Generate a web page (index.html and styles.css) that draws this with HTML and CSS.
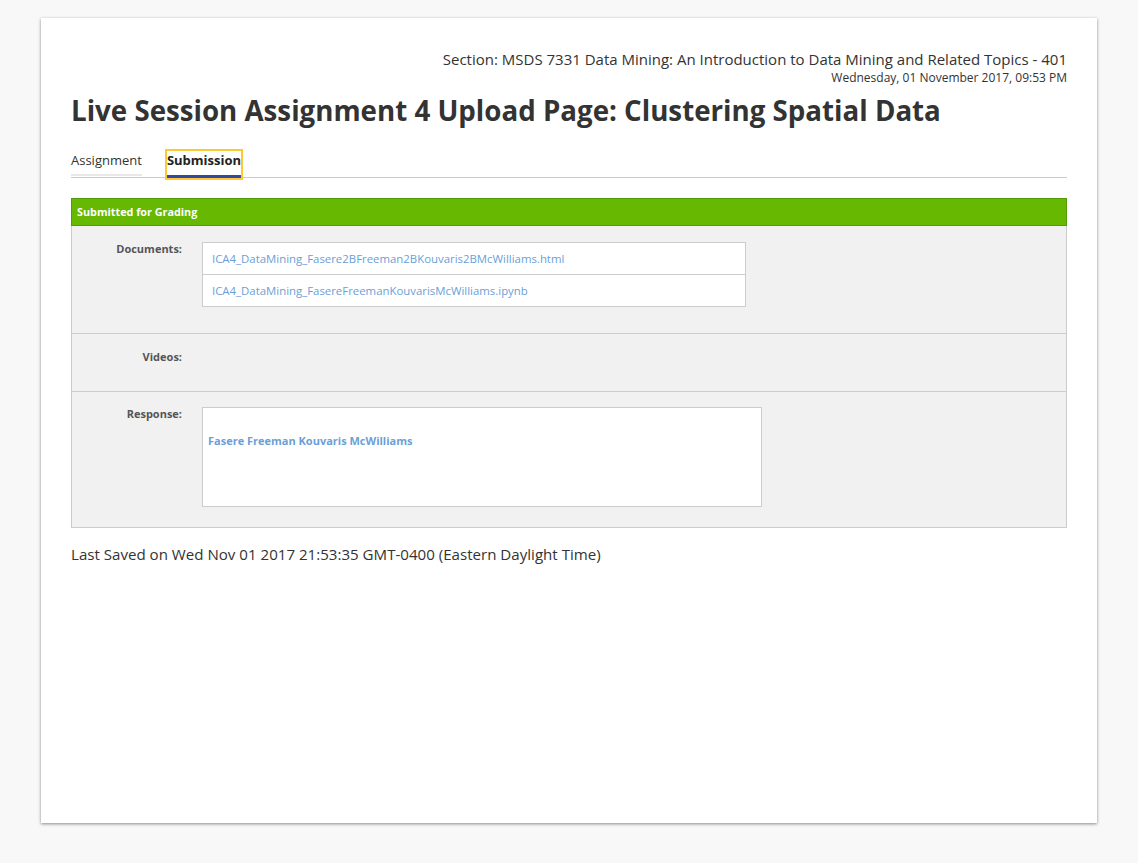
FILE: index.html
```html
<!DOCTYPE html>
<html>
<head>
<meta charset="utf-8">
<link rel="stylesheet" href="styles.css">
</head>
<body>
<div class="card">
  <div class="meta">
    <div class="section">Section: MSDS 7331 Data Mining: An Introduction to Data Mining and Related Topics - 401</div>
    <div class="date">Wednesday, 01 November 2017, 09:53 PM</div>
  </div>
  <h1 class="title">Live Session Assignment 4 Upload Page: Clustering Spatial Data</h1>
  <div class="tabs">
    <div class="tab tab-plain">Assignment</div>
    <div class="tab tab-active">Submission</div>
  </div>
  <div class="status">Submitted for Grading</div>
  <div class="panel">
    <div class="row row-docs">
      <div class="label">Documents:</div>
      <div class="docs">
        <div class="doc"><a class="link">ICA4_DataMining_Fasere2BFreeman2BKouvaris2BMcWilliams.html</a></div>
        <div class="doc"><a class="link">ICA4_DataMining_FasereFreemanKouvarisMcWilliams.ipynb</a></div>
      </div>
    </div>
    <div class="row row-videos">
      <div class="label">Videos:</div>
    </div>
    <div class="row row-response">
      <div class="label">Response:</div>
      <div class="response">Fasere Freeman Kouvaris McWilliams</div>
    </div>
  </div>
  <div class="saved">Last Saved on Wed Nov 01 2017 21:53:35 GMT-0400 (Eastern Daylight Time)</div>
</div>
</body>
</html>
```
FILE: styles.css
```css
html, body {
  margin: 0;
  padding: 0;
  background: #f8f8f8;
  font-family: "Open Sans", Lato, sans-serif;
  color: #333;
}
body {
  padding: 18px 41px 40px 41px;
}
.card {
  width: 1056px;
  height: 805px;
  box-sizing: border-box;
  background: #fff;
  box-shadow: 0 1px 3px rgba(0,0,0,0.45);
  padding: 31px 30px 0 30px;
}
.meta {
  text-align: right;
}
.section {
  font-size: 15px;
  line-height: 20px;
  color: #333;
}
.date {
  margin-top: 1px;
  font-size: 12px;
  line-height: 16px;
  color: #333;
}
.title {
  margin: 7px 0 0 0;
  font-size: 27.7px;
  line-height: 34px;
  font-weight: 700;
  color: #333;
}
.tabs {
  display: flex;
  align-items: flex-start;
  gap: 25px;
  margin-top: 24px;
  border-bottom: 1px solid #ccc;
}
.tab {
  font-size: 13px;
  line-height: 18px;
  box-sizing: border-box;
}
.tab-plain {
  color: #333;
  height: 25px;
  border-bottom: 2px solid #e8e8e8;
}
.tab-active {
  height: 27px;
  margin-bottom: -1px;
  font-weight: 700;
  color: #222;
  border-bottom: 3px solid #35479b;
  outline: 2px solid #fcc934;
  outline-offset: 0;
}
.status {
  margin-top: 20px;
  background: #66b800;
  border: 1px solid #4f9b08;
  color: #fff;
  font-size: 10.8px;
  font-weight: 700;
  line-height: 26px;
  height: 26px;
  padding-left: 5px;
}
.panel {
  background: #f1f1f1;
  border: 1px solid #ccc;
  border-top: none;
}
.row {
  display: flex;
  border-bottom: 1px solid #ccc;
}
.row:last-child {
  border-bottom: none;
}
.label {
  width: 110px;
  flex: none;
  text-align: right;
  font-size: 11px;
  font-weight: 700;
  color: #555;
  padding-right: 20px;
  line-height: 14px;
}
.row-docs {
  height: 108px;
  box-sizing: border-box;
  padding-top: 16px;
}
.docs {
  width: 544px;
  box-sizing: border-box;
  background: #fff;
  border: 1px solid #ccc;
  align-self: flex-start;
}
.doc {
  height: 31px;
  line-height: 31px;
  padding-left: 9px;
  font-size: 11.4px;
}
.doc + .doc {
  border-top: 1px solid #ccc;
}
.link {
  color: #6a9fd8;
}
.row-videos {
  height: 58px;
  box-sizing: border-box;
  padding-top: 16px;
}
.row-response {
  height: 135px;
  box-sizing: border-box;
  padding-top: 15px;
}
.response {
  width: 560px;
  height: 100px;
  box-sizing: border-box;
  background: #fff;
  border: 1px solid #ccc;
  padding: 25px 5px 0 5px;
  color: #6a9fd8;
  font-size: 11px;
  font-weight: 700;
}
.saved {
  margin-top: 16px;
  font-size: 15.1px;
  line-height: 20px;
  color: #333;
}
```
